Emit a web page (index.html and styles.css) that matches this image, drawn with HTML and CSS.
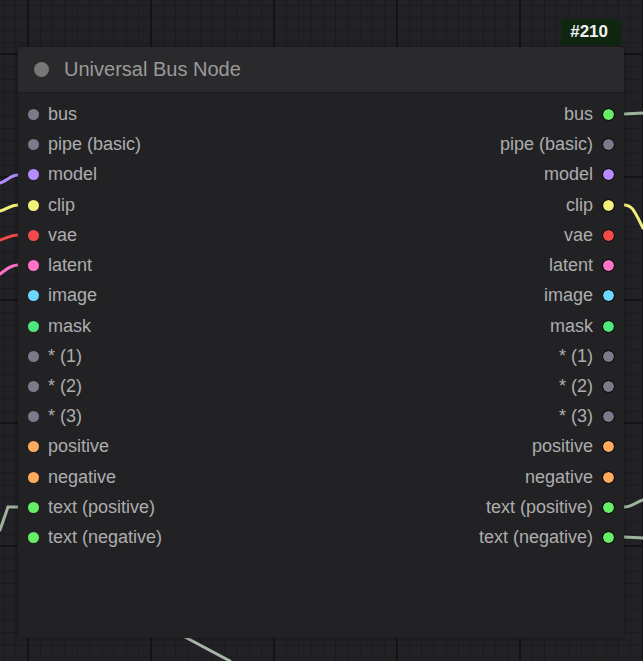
FILE: index.html
```html
<!DOCTYPE html>
<html lang="en">
<head>
    <meta charset="UTF-8">
    <meta name="viewport" content="width=device-width, initial-scale=1.0">
    <title>Universal Bus Node</title>
    <link rel="stylesheet" href="styles.css">
</head>
<body>
    <!-- wires on the canvas, behind the node -->
    <svg class="wires" width="643" height="661" viewBox="0 0 643 661">
        <path d="M0 183 C8 181 10 175 18 175" stroke="#b48cff" />
        <path d="M0 211 C8 209 10 205 18 205" stroke="#f0f07a" />
        <path d="M0 240 C8 238 10 235 18 235" stroke="#f24a4a" />
        <path d="M0 274 C6 270 10 265 18 265" stroke="#ff72c8" />
        <path d="M0 530 L8 507 L18 507" stroke="#9fb39f" />
        <path d="M10 537 L18 533 L18 541 Z" fill="#9fb39f" stroke="none" />
        <path d="M624 114 L643 113" stroke="#9fb39f" />
        <path d="M624 205 C632 205 634 210 643 228" stroke="#f0f07a" />
        <path d="M624 507 C632 507 636 502 643 500" stroke="#9fb39f" />
        <path d="M624 537 C632 537 636 538 643 538" stroke="#9fb39f" />
        <path d="M183 636 L230 661" stroke="#a6b8a6" stroke-width="4" />
    </svg>

    <div class="badge-row">
        <span class="badge">#210</span>
    </div>

    <div class="node">
        <div class="node-header">
            <span class="header-dot"></span>
            <span class="node-title">Universal Bus Node</span>
        </div>
        <div class="node-body">
            <div class="slot"><span class="in"><i class="dot gray"></i>bus</span><span class="out">bus<i class="dot text"></i></span></div>
            <div class="slot"><span class="in"><i class="dot gray"></i>pipe (basic)</span><span class="out">pipe (basic)<i class="dot gray"></i></span></div>
            <div class="slot"><span class="in"><i class="dot model"></i>model</span><span class="out">model<i class="dot model"></i></span></div>
            <div class="slot"><span class="in"><i class="dot clip"></i>clip</span><span class="out">clip<i class="dot clip"></i></span></div>
            <div class="slot"><span class="in"><i class="dot vae"></i>vae</span><span class="out">vae<i class="dot vae"></i></span></div>
            <div class="slot"><span class="in"><i class="dot latent"></i>latent</span><span class="out">latent<i class="dot latent"></i></span></div>
            <div class="slot"><span class="in"><i class="dot image"></i>image</span><span class="out">image<i class="dot image"></i></span></div>
            <div class="slot"><span class="in"><i class="dot mask"></i>mask</span><span class="out">mask<i class="dot mask"></i></span></div>
            <div class="slot"><span class="in"><i class="dot gray"></i>* (1)</span><span class="out">* (1)<i class="dot gray"></i></span></div>
            <div class="slot"><span class="in"><i class="dot gray"></i>* (2)</span><span class="out">* (2)<i class="dot gray"></i></span></div>
            <div class="slot"><span class="in"><i class="dot gray"></i>* (3)</span><span class="out">* (3)<i class="dot gray"></i></span></div>
            <div class="slot"><span class="in"><i class="dot cond"></i>positive</span><span class="out">positive<i class="dot cond"></i></span></div>
            <div class="slot"><span class="in"><i class="dot cond"></i>negative</span><span class="out">negative<i class="dot cond"></i></span></div>
            <div class="slot"><span class="in"><i class="dot text"></i>text (positive)</span><span class="out">text (positive)<i class="dot text"></i></span></div>
            <div class="slot"><span class="in"><i class="dot text"></i>text (negative)</span><span class="out">text (negative)<i class="dot text"></i></span></div>
        </div>
    </div>
</body>
</html>
```

FILE: styles.css
```css
html, body {
    height: 100%;
}

body {
    margin: 0;
    position: relative;
    overflow: hidden;
    font-family: 'Liberation Sans', Arial, sans-serif;
    background-color: #222226;
    background-image:
        linear-gradient(90deg, #141416 2px, transparent 2px),
        linear-gradient(0deg, #141416 2px, transparent 2px),
        linear-gradient(90deg, #1b1b1e 1px, transparent 1px),
        linear-gradient(0deg, #1b1b1e 1px, transparent 1px);
    background-size: 123px 123px, 123px 123px, 12.3px 12.3px, 12.3px 12.3px;
    background-position: 27px 55px, 27px 55px, 3px 6px, 3px 6px;
}

.wires {
    position: absolute;
    left: 0;
    top: 0;
    z-index: 0;
}

.wires path {
    fill: none;
    stroke-width: 3;
    stroke-linecap: round;
}

.badge-row {
    position: relative;
    z-index: 1;
    display: flex;
    justify-content: flex-end;
    padding: 19px 22px 0 0;
    height: 26px;
}

.badge {
    background-color: #0f2711;
    color: #f2f2f2;
    font-size: 17px;
    font-weight: bold;
    line-height: 26px;
    padding: 0 13px 0 9px;
    border-radius: 4px 4px 0 0;
}

.node {
    position: relative;
    z-index: 1;
    margin: 2px 0 0 18px;
    width: 606px;
    height: 591px;
    background-color: #222225;
    border-radius: 4px;
    box-shadow: 0 0 4px rgba(0, 0, 0, 0.4);
}

.node-header {
    display: flex;
    align-items: center;
    height: 46px;
    padding-left: 16px;
    background-color: #2a2a2d;
    border-radius: 4px 4px 0 0;
    border-bottom: 1px solid #1d1d20;
    box-sizing: border-box;
}

.header-dot {
    width: 15px;
    height: 15px;
    border-radius: 50%;
    background-color: #777;
    margin-right: 15px;
}

.node-title {
    color: #9a9a9a;
    font-size: 20px;
}

.node-body {
    padding-top: 6.4px;
}

.slot {
    display: flex;
    justify-content: space-between;
    align-items: center;
    height: 30.22px;
    color: #adadad;
    font-size: 18px;
}

.in, .out {
    display: flex;
    align-items: center;
}

.in .dot {
    margin: 0 9px 0 10px;
}

.out .dot {
    margin: 0 10px 0 10px;
    outline: 1.5px solid #0c0c0c;
}

.dot {
    width: 11px;
    height: 11px;
    border-radius: 50%;
    display: inline-block;
}

.dot.gray   { background-color: #7b7a8a; }
.dot.model  { background-color: #b48cff; }
.dot.clip   { background-color: #f0f07a; }
.dot.vae    { background-color: #f24a4a; }
.dot.latent { background-color: #ff72c8; }
.dot.image  { background-color: #6cd6ff; }
.dot.mask   { background-color: #4fe87c; }
.dot.cond   { background-color: #ffaa5c; }
.dot.text   { background-color: #66ee66; }
```
